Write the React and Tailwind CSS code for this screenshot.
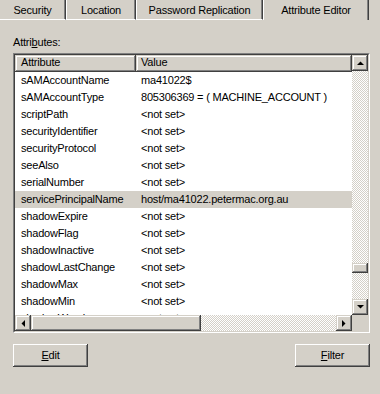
import React from "react";

const rows = [
  ["sAMAccountName", "ma41022$"],
  ["sAMAccountType", "805306369 = ( MACHINE_ACCOUNT )"],
  ["scriptPath", "<not set>"],
  ["securityIdentifier", "<not set>"],
  ["securityProtocol", "<not set>"],
  ["seeAlso", "<not set>"],
  ["serialNumber", "<not set>"],
  ["servicePrincipalName", "host/ma41022.petermac.org.au"],
  ["shadowExpire", "<not set>"],
  ["shadowFlag", "<not set>"],
  ["shadowInactive", "<not set>"],
  ["shadowLastChange", "<not set>"],
  ["shadowMax", "<not set>"],
  ["shadowMin", "<not set>"],
  ["shadowWarning", "<not set>"],
];

const raised =
  "bg-[#d4d0c8] shadow-[inset_-1px_-1px_#404040,inset_1px_1px_#d4d0c8,inset_-2px_-2px_#808080,inset_2px_2px_#ffffff]";
const checker =
  "bg-[repeating-conic-gradient(#d4d0c8_0_25%,#ffffff_0_50%)] bg-[length:2px_2px]";

function Arrow({ dir }) {
  const pts = {
    up: "0,4 3.5,0.5 7,4",
    down: "0,0 3.5,3.5 7,0",
    left: "4,0 0.5,3.5 4,7",
    right: "0,0 3.5,3.5 0,7",
  }[dir];
  const vertical = dir === "up" || dir === "down";
  return (
    <svg width={vertical ? 7 : 4} height={vertical ? 4 : 7} viewBox={vertical ? "0 0 7 4" : "0 0 4 7"}>
      <polygon points={pts} fill="#000" />
    </svg>
  );
}

function ScrollButton({ dir }) {
  return (
    <div className={`w-4 h-4 shrink-0 flex items-center justify-center ${raised}`}>
      <Arrow dir={dir} />
    </div>
  );
}

function Tab({ label, active, width }) {
  if (active) {
    return (
      <div
        className="h-[20px] flex items-start justify-center pt-[2px] border-l border-l-white shadow-[inset_-1px_0_#808080] border-r border-r-[#404040]"
        style={{ width }}
      >
        {label}
      </div>
    );
  }
  return (
    <div
      className="h-[20px] flex items-start justify-center pt-[2px] border-l border-l-white border-b border-b-white shadow-[inset_-1px_0_#808080] border-r border-r-[#404040]"
      style={{ width }}
    >
      {label}
    </div>
  );
}

export default function App() {
  return (
    <div className="w-[380px] h-[394px] bg-[#d4d0c8] text-black text-[11px] tracking-[-0.2px] font-['Liberation_Sans',Arial,sans-serif] overflow-hidden">
      <div className="flex items-start">
        <div className="h-[20px] w-[66px] flex items-start justify-center pt-[2px] border-b border-b-white shadow-[inset_-1px_0_#808080] border-r border-r-[#404040]">
          Security
        </div>
        <Tab label="Location" width={70} />
        <Tab label="Password Replication" width={127} />
        <Tab label="Attribute Editor" width={106} active />
      </div>

      <div className="pl-[13px] pt-[16px]">
        <div className="leading-[13px]">
          Attri<span className="underline">b</span>utes:
        </div>

        <div className="mt-[4px] w-[357px] h-[280px] flex flex-col border border-t-[#808080] border-l-[#808080] border-b-white border-r-white">
          <div className="flex-1 flex flex-col border border-t-[#404040] border-l-[#404040] border-b-[#d4d0c8] border-r-[#d4d0c8] bg-white min-h-0">
            <div className="flex-1 flex min-h-0">
              <div className="flex-1 flex flex-col min-w-0">
                <div className="flex h-[17px] shrink-0 leading-[15px]">
                  <div className={`w-[121px] pl-[6px] ${raised}`}>Attribute</div>
                  <div className={`flex-1 pl-[5px] ${raised}`}>Value</div>
                </div>
                <div className="flex-1 overflow-hidden">
                  {rows.map(([attr, val]) => (
                    <div
                      key={attr}
                      className={`flex h-[17px] leading-[17px] whitespace-nowrap ${
                        attr === "servicePrincipalName" ? "bg-[#d4d0c8]" : ""
                      }`}
                    >
                      <div className="w-[121px] pl-[6px]">{attr}</div>
                      <div className="flex-1 pl-[5px]">{val}</div>
                    </div>
                  ))}
                </div>
              </div>
              <div className={`w-4 flex flex-col ${checker}`}>
                <ScrollButton dir="up" />
                <div className="flex-1 flex flex-col">
                  <div className="h-[192px]" />
                  <div className={`h-[10px] ${raised}`} />
                </div>
                <ScrollButton dir="down" />
              </div>
            </div>
            <div className="h-4 flex shrink-0">
              <div className={`flex-1 flex ${checker}`}>
                <ScrollButton dir="left" />
                <div className="flex-1 flex">
                  <div className={`w-[170px] ${raised}`} />
                </div>
                <ScrollButton dir="right" />
              </div>
              <div className="w-4 bg-[#d4d0c8]" />
            </div>
          </div>
        </div>

        <div className="mt-[11px] flex justify-between w-[357px]">
          <button className={`w-[75px] h-[23px] ${raised} shadow-[inset_-1px_-1px_#404040,inset_1px_1px_#ffffff,inset_-2px_-2px_#808080]`}>
            <span className="underline">E</span>dit
          </button>
          <button className={`w-[75px] h-[23px] ${raised} shadow-[inset_-1px_-1px_#404040,inset_1px_1px_#ffffff,inset_-2px_-2px_#808080]`}>
            <span className="underline">F</span>ilter
          </button>
        </div>
      </div>
    </div>
  );
}
